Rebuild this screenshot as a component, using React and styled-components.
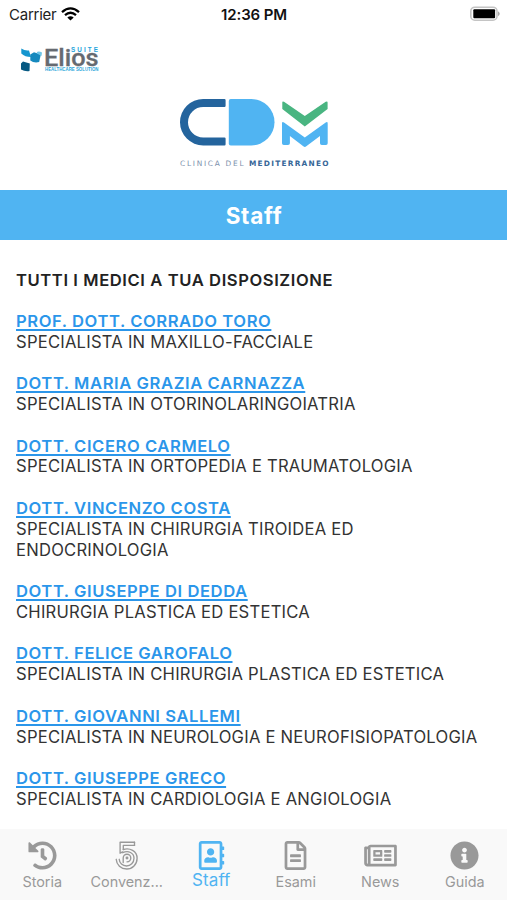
import React from 'react';
import styled, { createGlobalStyle } from 'styled-components';
import { FaHistory, FaRegAddressBook, FaRegFileAlt, FaRegNewspaper, FaInfoCircle } from 'react-icons/fa';

const Global = createGlobalStyle`
  * { box-sizing: border-box; }
  body { margin: 0; background: #fff; overflow: hidden; }
`;

const Screen = styled.div`
  width: 507px;
  height: 900px;
  display: flex;
  flex-direction: column;
  background: #fff;
  color: #222;
  font-family: Inter, "Liberation Sans", sans-serif;
`;

const StatusBar = styled.header`
  height: 27px;
  flex: none;
  padding: 0 6px 0 9px;
  display: grid;
  grid-template-columns: 1fr auto 1fr;
  align-items: center;
  font-size: 15px;
  color: #222;
`;

const Carrier = styled.div`
  display: flex;
  align-items: center;
  gap: 5px;
  padding-top: 1px;
  letter-spacing: -0.25px;
`;

const Clock = styled.time`
  font-weight: 600;
  font-size: 15px;
  letter-spacing: -0.12px;
  color: #111;
  padding: 1px 2px 0 0;
`;

const BatterySlot = styled.div`
  display: flex;
  justify-content: flex-end;
`;

const Brand = styled.div`
  height: 163px;
  flex: none;
  display: flex;
  flex-direction: column;
`;

const EliosLogo = styled.svg`
  display: block;
  margin: 17px 0 0 20px;
  flex: none;
  overflow: visible;
`;

const ClinicLogo = styled.svg`
  display: block;
  margin: 22px 0 0 178px;
  flex: none;
`;

const TitleBar = styled.h1`
  margin: 0;
  height: 50px;
  flex: none;
  display: flex;
  align-items: center;
  justify-content: center;
  background: #50b4f2;
  color: #fff;
  font-size: 22.5px;
  font-weight: 700;
  letter-spacing: 0.7px;
  padding: 1px 0 0 1px;
`;

const Content = styled.main`
  flex: 1;
  min-height: 0;
  padding: 29.5px 16px 0;
  font-size: 16.6px;
  line-height: 20.78px;
`;

const Heading = styled.h2`
  margin: 0 0 20.78px;
  font-size: inherit;
  font-weight: 600;
  letter-spacing: 0.58px;
`;

const Doctor = styled.section`
  margin-bottom: 20.78px;
`;

const DoctorName = styled.a`
  display: block;
  width: fit-content;
  color: #2b96ea;
  font-weight: 600;
  letter-spacing: 0.57px;
  white-space: nowrap;
  text-decoration: underline;
  text-decoration-thickness: 2px;
  text-underline-offset: 2px;
  text-decoration-skip-ink: none;
`;

const Specialty = styled.p`
  margin: 0;
  color: #333;
  letter-spacing: 0.23px;
`;

const TabBar = styled.nav`
  height: 71px;
  flex: none;
  display: grid;
  grid-template-columns: repeat(6, 1fr);
  background: #f9f9f9;
`;

const Tab = styled.div`
  display: flex;
  flex-direction: column;
  align-items: center;
  padding-top: 12px;
  color: ${(p) => (p.$active ? '#50b4f2' : '#999')};
  font-size: ${(p) => (p.$active ? '17px' : '14.4px')};
  line-height: 20px;
  letter-spacing: ${(p) => (p.$active ? '0.1px' : '0')};
  > svg { height: 29px; width: 33px; flex: none; display: block; }
`;

const TabLabel = styled.span`
  margin-top: ${(p) => (p.$active ? '0' : '2px')};
`;

const WifiIcon = () => (
  <svg width="19" height="14" viewBox="0 0 19 14" fill="none" stroke="#000" strokeWidth="2.3">
    <path d="M1 5.1Q9.5-2.4 18 5.1M4 8.2Q9.5 3.4 15 8.2" />
    <path d="M6.3 10.5Q9.5 7.8 12.7 10.5L9.5 13.6Z" fill="#000" stroke="none" />
  </svg>
);

const BatteryIcon = () => (
  <svg width="31" height="16" viewBox="0 0 31 16">
    <rect x=".8" y="1.2" width="26.2" height="13" rx="4" fill="#fff" stroke="#c4c4c4" strokeWidth="1.6" />
    <rect x="3.3" y="3.2" width="21.8" height="9" rx="1" fill="#000" />
    <path d="M28 5.2Q31.5 7.7 28 10.2Z" fill="#aaa" />
  </svg>
);

const FiveIcon = () => (
  <svg viewBox="0 0 24 29" fill="none" stroke="currentColor" strokeWidth="1.35" strokeLinejoin="round" strokeLinecap="round">
    <path d="M20 1.2H5.6V12.2L8.2 10.9M20 4.4H8.8V8.5" />
    <path d="M20 1.2V4.4" />
    <path d="M8.8 8.5C15.2 6.5 22.6 10 22.6 17.2C22.6 23.5 17.8 28 12.3 28C6.4 28 2 23.7 1.7 18.3" />
    <path d="M8.2 11.7C14 9 19.5 12 19.5 17.3C19.5 21.8 16 25 12 25C8 25 5 22 4.7 18.3" />
    <path d="M8.7 21.5V17A3.8 3.8 0 1 1 12.5 20.8" />
    <circle cx="12.5" cy="17" r=".8" fill="currentColor" />
  </svg>
);

const doctors = [
  ['PROF. DOTT. CORRADO TORO', 'SPECIALISTA IN MAXILLO-FACCIALE'],
  ['DOTT. MARIA GRAZIA CARNAZZA', 'SPECIALISTA IN OTORINOLARINGOIATRIA'],
  ['DOTT. CICERO CARMELO', 'SPECIALISTA IN ORTOPEDIA E TRAUMATOLOGIA'],
  ['DOTT. VINCENZO COSTA', 'SPECIALISTA IN CHIRURGIA TIROIDEA ED ENDOCRINOLOGIA'],
  ['DOTT. GIUSEPPE DI DEDDA', 'CHIRURGIA PLASTICA ED ESTETICA'],
  ['DOTT. FELICE GAROFALO', 'SPECIALISTA IN CHIRURGIA PLASTICA ED ESTETICA'],
  ['DOTT. GIOVANNI SALLEMI', 'SPECIALISTA IN NEUROLOGIA E NEUROFISIOPATOLOGIA'],
  ['DOTT. GIUSEPPE GRECO', 'SPECIALISTA IN CARDIOLOGIA E ANGIOLOGIA'],
];

const tabs = [
  ['Storia', FaHistory],
  ['Convenz...', FiveIcon],
  ['Staff', FaRegAddressBook, true],
  ['Esami', FaRegFileAlt],
  ['News', FaRegNewspaper],
  ['Guida', FaInfoCircle],
];

export default function App() {
  return (
    <Screen>
      <Global />
      <StatusBar>
        <Carrier>Carrier <WifiIcon /></Carrier>
        <Clock>12:36 PM</Clock>
        <BatterySlot><BatteryIcon /></BatterySlot>
      </StatusBar>
      <Brand>
        <EliosLogo width="82" height="30" viewBox="0 0 82 30">
          <path d="M1.3 4.5Q5 7 9 6.4L11 13Q5 13 1.3 9.5Z" fill="#1596cf" />
          <path d="M10.3 10.5L14 8.3L20.8 10.5L19.2 18Q14 19.3 10.3 16.4Z" fill="#1689be" />
          <path d="M1 19.5L3 17.5L9.8 19.5L9.5 27Q5 27.7 1 25.5Z" fill="#075982" />
          <path d="M16.8 8Q19 6.8 22 8.4L21.5 12L17 9.6Z" fill="#70c6e8" />
          <text x="24" y="21.6" textLength="54.5" lengthAdjust="spacingAndGlyphs" fill="#666a70" stroke="#666a70" strokeWidth=".3" fontFamily="Roboto, sans-serif" fontSize="23.2" fontWeight="500">Elios</text>
          <text x="51" y="7.6" textLength="27" fill="#25a3db" fontFamily="Liberation Sans, sans-serif" fontSize="6.3" fontWeight="700">SUITE</text>
          <text x="25" y="27.2" textLength="53.5" lengthAdjust="spacingAndGlyphs" fill="#2ba6da" fontFamily="Liberation Sans, sans-serif" fontSize="4.9" fontWeight="700">HEALTHCARE SOLUTION</text>
        </EliosLogo>
        <ClinicLogo width="154" height="74" viewBox="0 0 154 74">
          <path d="M46.5 3Q47.6 3 47.6 4.2V9.8Q47.6 11 46.5 11H25.2A15.2 15.2 0 0 0 25.2 41.4H46.5Q47.6 41.4 47.6 42.6V48.2Q47.6 49.4 46.5 49.4H25.2A23.2 23.2 0 0 1 25.2 3Z" fill="#24649d" />
          <path d="M52.7 3H73.3A23.2 23.2 0 0 1 73.3 49.4H52.7Q50.8 49.4 50.8 47.5V4.9Q50.8 3 52.7 3Z" fill="#50b4f2" />
          <path d="M104.3 6.5Q104.3 4.8 106 5.8L126.8 20L147.7 5.8Q149.6 4.8 149.6 6.5V13L126.8 30.4L104.3 13Z" fill="#49b581" />
          <path d="M104 27.5Q104 25.3 106 26.5L126.8 41.5L147.7 26.5Q149.7 25.3 149.7 27.5V47.3Q149.7 49 148 49H143.8Q142 49 142 47.3V40L128.3 50.3Q126.8 51.5 125.3 50.3L111.9 40V47.3Q111.9 49 110 49H105.8Q104 49 104 47.3Z" fill="#50b4f2" />
          <text x="2" y="69.6" textLength="63.5" fill="#7d91ad" fontFamily="DejaVu Sans, sans-serif" fontSize="7.4">CLINICA DEL</text>
          <text x="71" y="69.6" textLength="79.5" fill="#376798" fontFamily="DejaVu Sans, sans-serif" fontSize="7.4" fontWeight="700">MEDITERRANEO</text>
        </ClinicLogo>
      </Brand>
      <TitleBar>Staff</TitleBar>
      <Content>
        <Heading>TUTTI I MEDICI A TUA DISPOSIZIONE</Heading>
        {doctors.map(([name, specialty]) => (
          <Doctor key={name}>
            <DoctorName>{name}</DoctorName>
            <Specialty>{specialty}</Specialty>
          </Doctor>
        ))}
      </Content>
      <TabBar>
        {tabs.map(([label, Icon, active]) => (
          <Tab key={label} $active={active}>
            <Icon />
            <TabLabel $active={active}>{label}</TabLabel>
          </Tab>
        ))}
      </TabBar>
    </Screen>
  );
}
